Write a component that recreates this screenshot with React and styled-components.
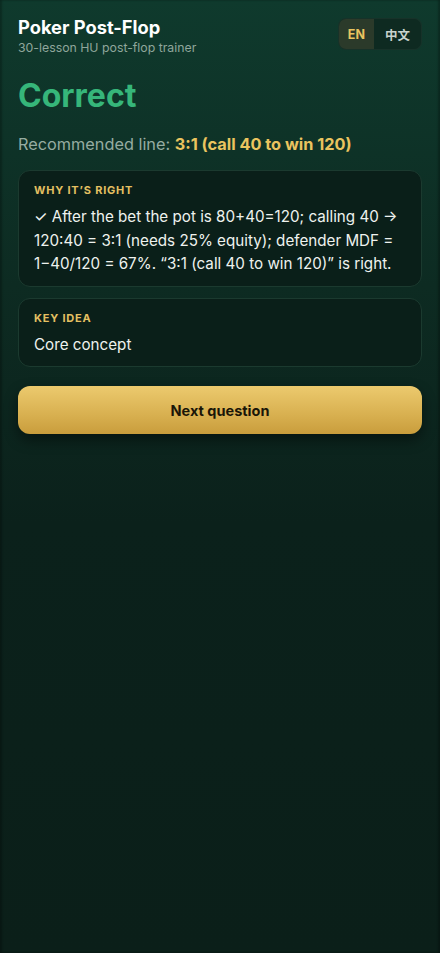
import React from "react";
import styled, { createGlobalStyle } from "styled-components";

const Global = createGlobalStyle`
  html, body { margin: 0; padding: 0; background: #0b1f19; }
  body {
    font-family: "Inter", "Noto Sans CJK SC", sans-serif;
    -webkit-font-smoothing: antialiased;
  }
  * { box-sizing: border-box; }
`;

const Screen = styled.div`
  min-height: 953px;
  padding: 16px 18px 32px;
  background: linear-gradient(180deg, #0f3a2d 0%, #0d2b22 30%, #0b211b 55%, #0b1f19 100%);
  box-shadow: inset 2px 0 2px rgba(0, 0, 0, 0.25), inset -2px 0 2px rgba(0, 0, 0, 0.25);
  color: #eef3ef;
`;

const Header = styled.header`
  display: flex;
  justify-content: space-between;
  align-items: flex-start;
`;

const Brand = styled.div`
  display: flex;
  flex-direction: column;
  gap: 2px;
`;

const AppTitle = styled.h1`
  margin: 0;
  font-size: 18.3px;
  font-weight: 700;
  line-height: 22px;
  color: #ffffff;
`;

const AppSub = styled.div`
  font-size: 12.3px;
  line-height: 15px;
  color: #8fa69b;
`;

const LangToggle = styled.div`
  display: flex;
  margin-top: 2px;
  border-radius: 8px;
  overflow: hidden;
  background: #0e2a21;
  border: 1px solid rgba(255, 255, 255, 0.04);
`;

const LangBtn = styled.button`
  border: 0;
  height: 30px;
  padding: 0 ${(p) => (p.$wide ? "11px" : "9px")};
  font-family: inherit;
  font-size: 12.5px;
  font-weight: 700;
  background: ${(p) => (p.$active ? "#2b3a2a" : "transparent")};
  color: ${(p) => (p.$active ? "#e9c460" : "#c9d3cd")};
`;

const Verdict = styled.h2`
  margin: 22px 0 0;
  font-size: 32px;
  line-height: 38px;
  font-weight: 700;
  color: #36b67a;
`;

const Recommend = styled.p`
  margin: 19px 0 0;
  font-size: 16.3px;
  line-height: 20px;
  color: #96aca1;
`;

const Highlight = styled.strong`
  color: #eac45f;
  font-weight: 700;
`;

const Card = styled.section`
  margin-top: ${(p) => p.$gap || "11px"};
  padding: 12px 15px 10px;
  border-radius: 12px;
  background: #0a1f19;
  border: 1px solid #1b3a2f;
`;

const CardLabel = styled.div`
  font-size: 11px;
  line-height: 14px;
  font-weight: 700;
  letter-spacing: 0.8px;
  color: #e4c062;
  text-transform: uppercase;
`;

const CardText = styled.p`
  margin: 8px 0 0;
  font-size: 15.2px;
  line-height: 23.5px;
  color: #eef2ee;
`;

const NextButton = styled.button`
  display: block;
  width: 100%;
  margin-top: 19px;
  height: 48px;
  border: 0;
  border-radius: 12px;
  font-family: inherit;
  font-size: 14.5px;
  font-weight: 700;
  color: #1a1608;
  background: linear-gradient(180deg, #ecca6e 0%, #d8b050 60%, #c99d3c 100%);
  box-shadow: 0 6px 14px rgba(0, 0, 0, 0.45);
`;

export default function App() {
  return (
    <>
      <Global />
      <Screen>
        <Header>
          <Brand>
            <AppTitle>Poker Post-Flop</AppTitle>
            <AppSub>30-lesson HU post-flop trainer</AppSub>
          </Brand>
          <LangToggle>
            <LangBtn $active>EN</LangBtn>
            <LangBtn $wide>中文</LangBtn>
          </LangToggle>
        </Header>

        <Verdict>Correct</Verdict>
        <Recommend>
          Recommended line: <Highlight>3:1 (call 40 to win 120)</Highlight>
        </Recommend>

        <Card $gap="16px">
          <CardLabel>Why it’s right</CardLabel>
          <CardText>
            ✓ After the bet the pot is 80+40=120; calling 40 → 120:40 = 3:1
            (needs 25% equity); defender MDF = 1−40/120 = 67%. “3:1 (call 40 to
            win 120)” is right.
          </CardText>
        </Card>

        <Card>
          <CardLabel>Key idea</CardLabel>
          <CardText>Core concept</CardText>
        </Card>

        <NextButton>Next question</NextButton>
      </Screen>
    </>
  );
}
